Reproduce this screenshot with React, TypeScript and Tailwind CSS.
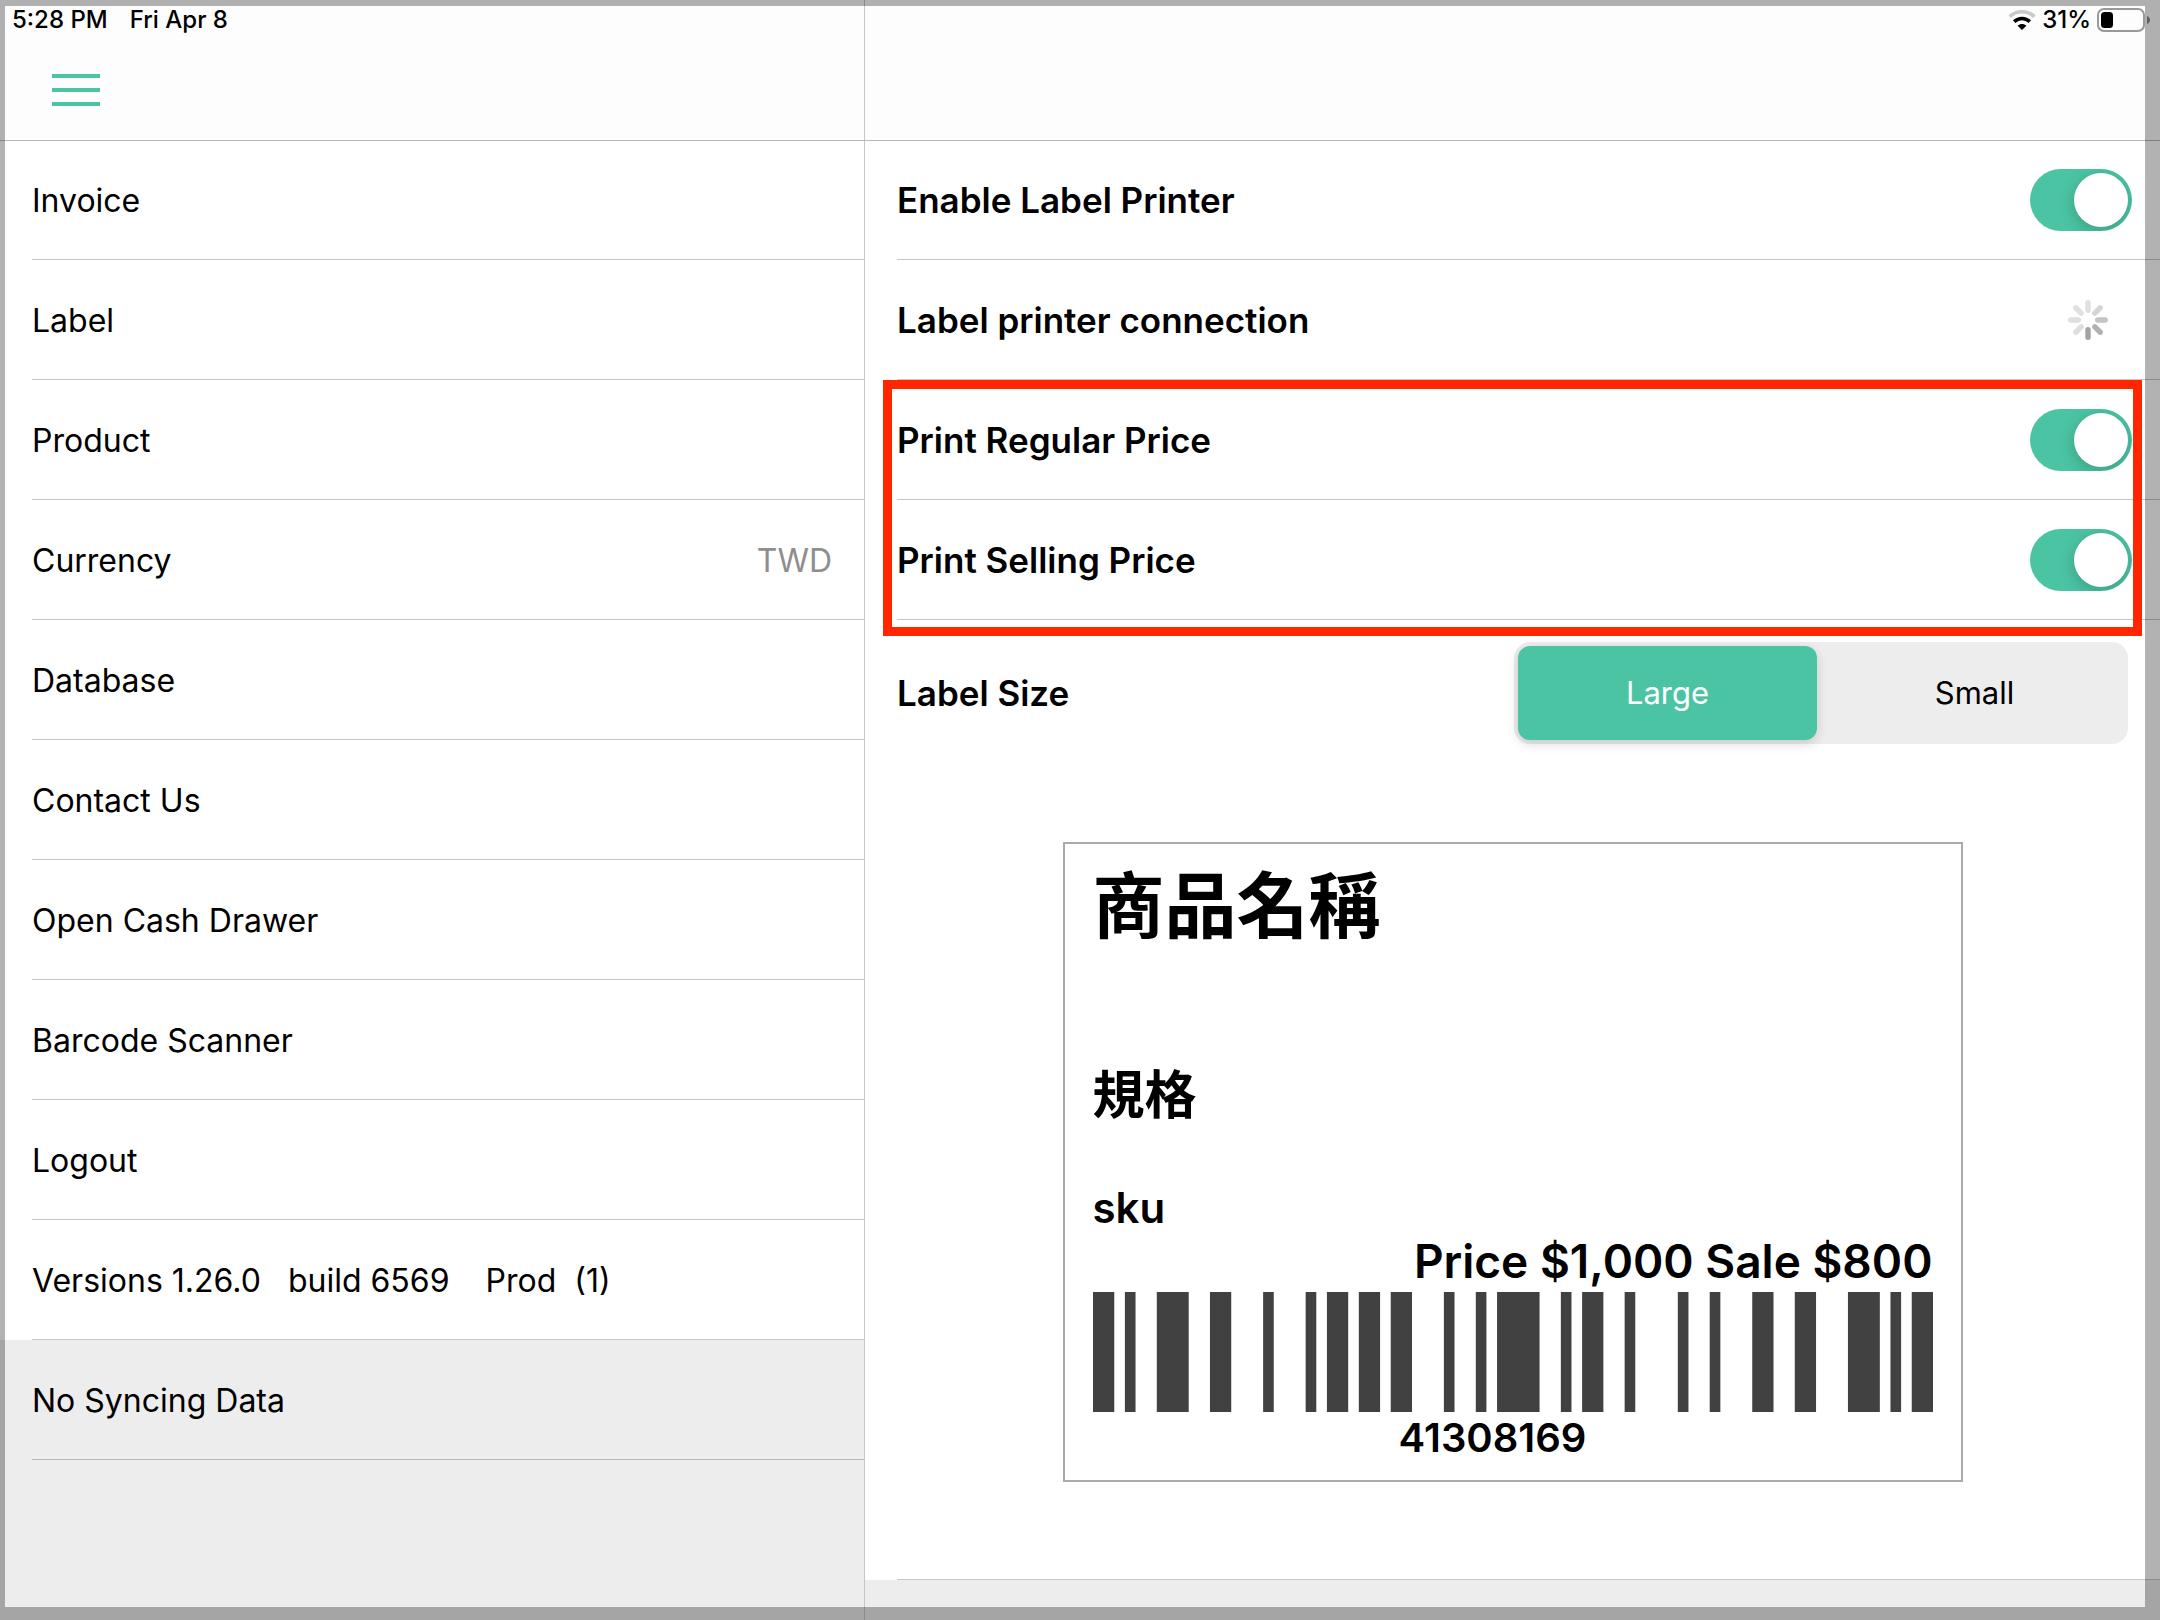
import { useState } from "react";

const MENU = [
  { label: "Invoice" },
  { label: "Label" },
  { label: "Product" },
  { label: "Currency", value: "TWD" },
  { label: "Database" },
  { label: "Contact Us" },
  { label: "Open Cash Drawer" },
  { label: "Barcode Scanner" },
  { label: "Logout" },
];

// Code 128 element widths in modules: bar, space, bar, space, ...
const BARCODE = "2112322313112121231211421122141213222331112";
const BARCODE_MODULES = 79;

function Barcode() {
  let x = 0;
  const bars = BARCODE.split("").map((digit, i) => {
    const width = Number(digit);
    const start = x;
    x += width;
    return i % 2 === 0 ? <rect key={i} x={start} y="0" width={width} height="1" /> : null;
  });
  return (
    <svg
      viewBox={`0 0 ${BARCODE_MODULES} 1`}
      preserveAspectRatio="none"
      className="block h-[120px] w-full fill-[#414141]"
      role="img"
      aria-label="Barcode 41308169"
    >
      {bars}
    </svg>
  );
}

function WifiIcon() {
  return (
    <svg viewBox="0 0 28 20" className="h-5 w-7" fill="none" aria-hidden="true">
      <path d="M1.6 6.6C8.6 0.2 19.4 0.2 26.4 6.6" stroke="#c9c9c9" strokeWidth="3.6" />
      <path d="M6.2 11.6C10.8 7.4 17.2 7.4 21.8 11.6" stroke="#000" strokeWidth="3.6" />
      <path d="M14 20L9.6 15.8C12.1 13.5 15.9 13.5 18.4 15.8Z" fill="#000" />
    </svg>
  );
}

function BatteryIcon() {
  return (
    <svg viewBox="0 0 53 24" className="h-6 w-[53px]" fill="none" aria-hidden="true">
      <rect x="1" y="1" width="46" height="22" rx="6" stroke="#999" strokeWidth="2" />
      <rect x="4" y="4" width="12" height="16" rx="3.5" fill="#000" />
      <path d="M50 8C54 9.5 54 14.5 50 16Z" fill="#888" />
    </svg>
  );
}

const SPOKES = ["#e0e0e0", "#d6d6d6", "#c4c4c4", "#b2b2b2", "#a3a3a3", "#dedede", "#dfdfdf", "#e0e0e0"];

function Spinner() {
  return (
    <svg viewBox="0 0 40 40" className="size-10" role="img" aria-label="Connecting">
      {SPOKES.map((color, i) => (
        <rect key={i} x="17.3" y="0" width="5.4" height="13" rx="2.7" fill={color} transform={`rotate(${i * 45} 20 20)`} />
      ))}
    </svg>
  );
}

function ToggleRow({ id, label }: { id: string; label: string }) {
  const [on, setOn] = useState(true);
  return (
    <div className="ml-8 flex h-[120px] items-center justify-between border-b border-[#c6c6c8] pr-7">
      <label htmlFor={id} className="pt-0.5 text-[35px] font-semibold">
        {label}
      </label>
      <input
        id={id}
        type="checkbox"
        role="switch"
        checked={on}
        onChange={(e) => setOn(e.target.checked)}
        className="flex h-[62px] w-[102px] shrink-0 cursor-pointer appearance-none items-center overflow-hidden rounded-full bg-[#d9d9d9] p-1 before:block before:size-[54px] before:rounded-full before:bg-white before:shadow-[0_4px_16px_rgba(0,0,0,0.2)] checked:justify-end checked:bg-[#4bc4a4]"
      />
    </div>
  );
}

export default function App() {
  const [size, setSize] = useState("Large");
  return (
    <div className="relative flex min-h-screen flex-col bg-white font-['Inter','Noto_Sans_CJK_TC',sans-serif] text-black">
      <header className="relative z-10 flex h-[140px] bg-[#fdfdfd] shadow-[0_1px_0_#b8b8b8]">
        <div className="w-2/5 shrink-0">
          <div className="flex h-10 items-center gap-[22px] pl-3 text-[24px] font-medium">
            <span>5:28 PM</span>
            <span>Fri Apr 8</span>
          </div>
          <button type="button" aria-label="Open menu" className="mt-[34px] ml-[52px] flex w-12 flex-col gap-2.5">
            <span className="h-1 w-full bg-[#4bc4a4]" />
            <span className="h-1 w-full bg-[#4bc4a4]" />
            <span className="h-1 w-full bg-[#4bc4a4]" />
          </button>
        </div>
        <div className="flex flex-1 items-start justify-end border-l border-[#c6c6c8] pr-2.5">
          <div className="flex h-10 items-center gap-1.5 text-[24px] font-medium">
            <WifiIcon />
            <span>31%</span>
            <BatteryIcon />
          </div>
        </div>
      </header>

      <div className="flex flex-1">
        <nav className="w-2/5 shrink-0 bg-[#ededed] text-[32px]">
          <ul className="bg-white">
            {MENU.map((item) => (
              <li key={item.label} className="pl-8">
                <button
                  type="button"
                  className="flex h-[120px] w-full items-center justify-between border-b border-[#c6c6c8] pt-0.5 pr-8 text-left"
                >
                  <span>{item.label}</span>
                  {item.value && <span className="text-[#8e8e8e]">{item.value}</span>}
                </button>
              </li>
            ))}
            <li className="pl-8">
              <p className="flex h-[120px] items-center border-b border-[#c6c6c8] pt-0.5 whitespace-pre">
                {"Versions 1.26.0   build 6569    Prod  (1)"}
              </p>
            </li>
          </ul>
          <p className="ml-8 flex h-[120px] items-center border-b border-[#b9b9bb] pt-0.5">No Syncing Data</p>
        </nav>

        <main className="flex-1 border-l border-[#c6c6c8] bg-[#ededed]">
          <div className="bg-white">
            <ToggleRow id="enable-printer" label="Enable Label Printer" />
            <div className="ml-8 flex h-[120px] items-center justify-between border-b border-[#c6c6c8] pr-[52px]">
              <span className="pt-0.5 text-[35px] font-semibold">Label printer connection</span>
              <Spinner />
            </div>

            <div className="relative">
              <ToggleRow id="regular-price" label="Print Regular Price" />
              <ToggleRow id="selling-price" label="Print Selling Price" />
              <div className="pointer-events-none absolute inset-x-[18px] top-0 -bottom-4 border-[9px] border-[#ff2600]" />
            </div>

            <fieldset className="ml-8 flex h-[146px] items-center justify-between pr-8">
              <span id="size-label" className="text-[35px] font-semibold">
                Label Size
              </span>
              <div
                role="radiogroup"
                aria-labelledby="size-label"
                className="grid h-[102px] w-[614px] grid-cols-2 gap-2 rounded-[16px] bg-[#ededed] p-1 text-[31px]"
              >
                {["Large", "Small"].map((option) => (
                  <label
                    key={option}
                    className="relative flex cursor-pointer items-center justify-center rounded-[12px] has-checked:bg-[#4bc4a4] has-checked:text-white has-checked:shadow-[0_4px_12px_rgba(0,0,0,0.15)]"
                  >
                    <input
                      type="radio"
                      name="label-size"
                      value={option}
                      checked={size === option}
                      onChange={() => setSize(option)}
                      className="sr-only"
                    />
                    {option}
                  </label>
                ))}
              </div>
            </fieldset>

            <div className="pt-[76px]">
              <section className="mx-auto h-[640px] w-[900px] border-2 border-[#aaaaaa] px-7 pt-5 font-semibold">
                <h2 className="text-[72px] leading-[84px]">商品名稱</h2>
                <p className="mt-[116px] text-[52px] leading-[64px]">規格</p>
                <p className="mt-[54px] text-[42px] leading-[52px]">sku</p>
                <p className="pb-1 text-right text-[46px] leading-[54px]">Price $1,000 Sale $800</p>
                <Barcode />
                <p className="pr-10 text-center text-[40px] leading-[52px]">41308169</p>
              </section>
            </div>
            <div className="ml-8 h-[98px] border-b border-[#c6c6c8]" />
          </div>
        </main>
      </div>

      <div className="pointer-events-none absolute inset-0 z-20 border-t-6 border-r-15 border-b-13 border-l-5 border-black/30" />
    </div>
  );
}
